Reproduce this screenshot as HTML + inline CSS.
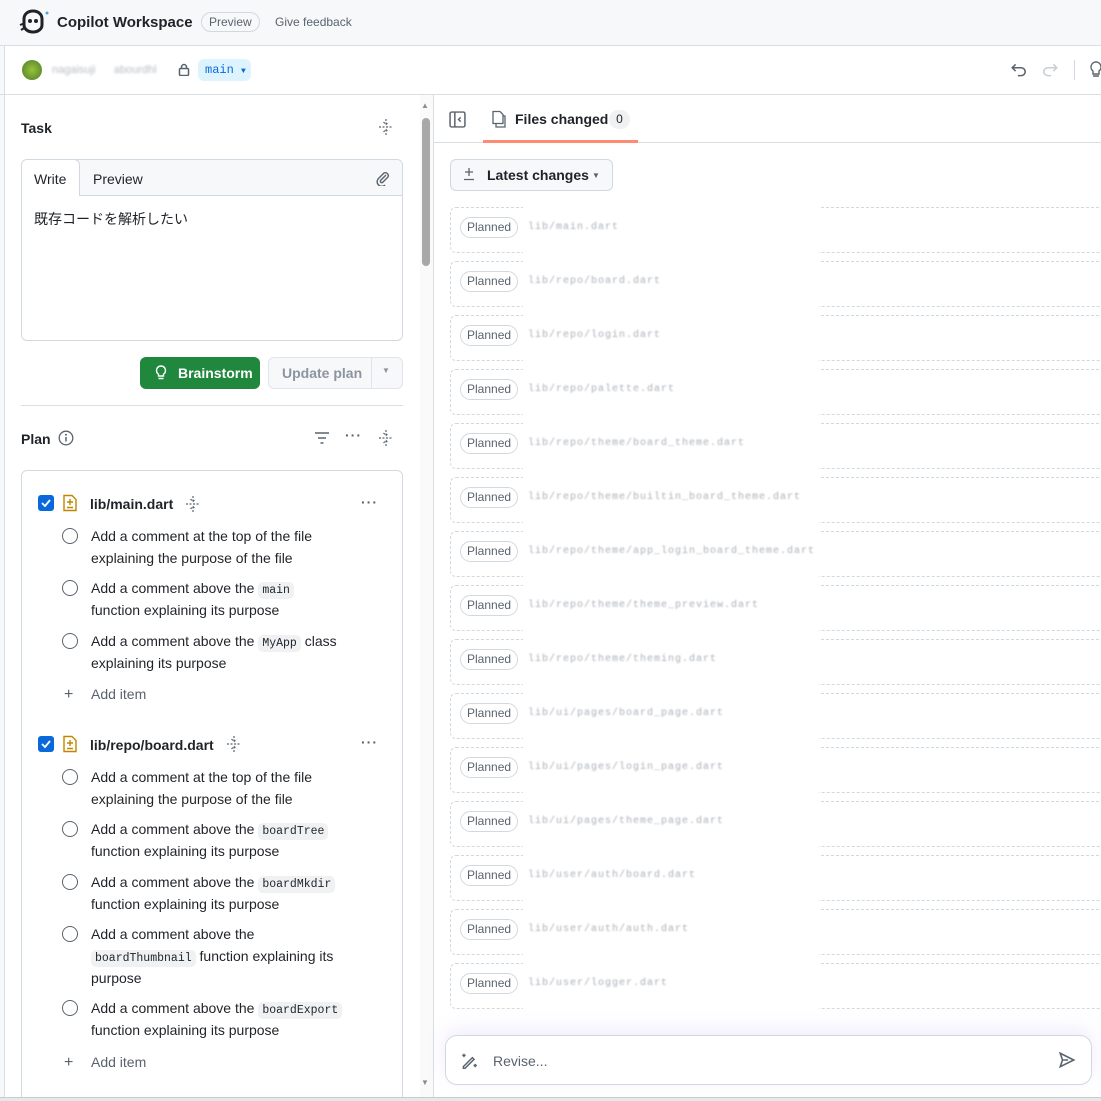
<!DOCTYPE html>
<html><head><meta charset="utf-8"><style>
*{box-sizing:border-box;margin:0;padding:0}
html{width:1101px;height:1101px;overflow:hidden}
body{width:1101px;height:1101px;overflow:hidden;background:#fff;font-family:"Liberation Sans","Noto Sans CJK JP",sans-serif;color:#1f2328;font-size:14px;position:relative}
.abs{position:absolute}
.hdr{left:0;top:0;width:1101px;height:46px;background:#f6f8fa;border-bottom:1px solid #d8dee4}
.tb{left:0;top:46px;width:1101px;height:49px;border-bottom:1px solid #d8dee4}
.code{font-family:"Liberation Mono",monospace;font-size:11.5px;background:#eff1f3;border-radius:5px;padding:2px 4px;line-height:1}
.item{position:absolute;left:91px;line-height:22px;font-size:14px;white-space:nowrap}
.circ{position:absolute;left:62px;width:16px;height:16px;border:1.6px solid #59636e;border-radius:50%}
.row{position:absolute;left:450px;width:660px;height:46px;border:1px dashed #d1d9e0;border-radius:6px}
.row .cov{position:absolute;left:72px;top:-2px;width:296px;height:48px;background:#fff}
.pl{position:absolute;left:9px;top:9px;height:21px;padding:0 6px;border:1px solid #d1d9e0;border-radius:12px;font-size:12px;line-height:19px;color:#59636e;background:#fff}
.bl{position:absolute;left:77px;top:14px;color:#aab0b8;font-size:10px;filter:blur(0.8px);letter-spacing:1px;font-family:"Liberation Mono",monospace}
.add{position:absolute;left:64px;color:#59636e;font-size:14px}
.add b{font-weight:normal;display:inline-block;width:27px;font-size:16px}
</style></head><body>
<div class="abs" style="left:0;top:0;width:5px;height:1101px;border-right:1px solid #d8dee4;background:#f6f8fa"></div>
<div class="abs hdr"></div>
<svg class="abs" style="left:18px;top:9px" width="32" height="26" viewBox="0 0 32 26"><path d="M6 10c0-5 4-8 9-8s9 3 9 8v6c0 4-4 7-9 7s-9-3-9-7z" fill="none" stroke="#1f2328" stroke-width="3"/><circle cx="12" cy="12" r="2" fill="#1f2328"/><circle cx="18" cy="12" r="2" fill="#1f2328"/><path d="M2 16l5-2M3 21l5-3" stroke="#1f2328" stroke-width="2"/><circle cx="29" cy="4" r="1.5" fill="#4aa8e0"/></svg>
<div class="abs" style="left:57px;top:14px;font-size:15px;font-weight:bold;color:#1f2328">Copilot Workspace</div>
<div class="abs" style="left:201px;top:12px;height:20px;padding:0 7px;border:1px solid #d1d9e0;border-radius:10px;font-size:12px;line-height:18px;color:#59636e">Preview</div>
<div class="abs" style="left:275px;top:15px;font-size:12px;color:#59636e">Give feedback</div>
<div class="abs tb"></div>
<div class="abs" style="left:22px;top:60px;width:20px;height:20px;border-radius:50%;background:radial-gradient(#9bc23a,#4a7a2a)"></div>
<div class="abs" style="left:52px;top:64px;font-size:11px;color:#b8bcc2;filter:blur(1px)">nagaisuji &nbsp;&nbsp;&nbsp;&nbsp; abourdhl</div>
<svg class="abs" style="left:178px;top:63px" width="12" height="13" viewBox="0 0 12 13"><rect x="1.5" y="5.5" width="9" height="7" rx="1" fill="none" stroke="#59636e" stroke-width="1.5"/><path d="M3.5 5.5V4a2.5 2.5 0 015 0v1.5" fill="none" stroke="#59636e" stroke-width="1.5"/></svg>
<div class="abs" style="left:198px;top:59px;height:22px;width:53px;background:#ddf4ff;border-radius:6px;font-family:'Liberation Mono',monospace;font-size:12px;color:#0969da;line-height:22px;padding-left:7px">main <span style="font-size:8px">▼</span></div>
<svg class="abs" style="left:1010px;top:61px" width="18" height="18" viewBox="0 0 16 16"><path d="M5 3L2 6l3 3M2 6h8a3.5 3.5 0 010 7H7" fill="none" stroke="#59636e" stroke-width="1.4"/></svg>
<svg class="abs" style="left:1041px;top:61px" width="18" height="18" viewBox="0 0 16 16"><path d="M11 3l3 3-3 3M14 6H6a3.5 3.5 0 000 7h3" fill="none" stroke="#c8ced5" stroke-width="1.4"/></svg>
<div class="abs" style="left:1074px;top:60px;width:1px;height:20px;background:#d1d9e0"></div>
<svg class="abs" style="left:1090px;top:60px" width="14" height="20" viewBox="0 0 14 20"><path d="M6 2a5 5 0 00-3 9v3h6v-3a5 5 0 00-3-9zM3 16h6" fill="none" stroke="#59636e" stroke-width="1.4"/></svg>

<div class="abs" style="left:21px;top:120px;font-size:14px;font-weight:bold">Task</div>
<svg class="abs" style="left:378px;top:118px" width="16" height="18" viewBox="0 0 16 18"><path d="M8 1v5M5.5 4L8 6.5 10.5 4M8 17v-5M5.5 14L8 11.5 10.5 14M1 9h14" fill="none" stroke="#59636e" stroke-width="1.2" stroke-dasharray="2 1.5"/></svg>
<div class="abs" style="left:21px;top:159px;width:382px;height:182px;border:1px solid #d1d9e0;border-radius:6px;overflow:hidden">
 <div style="height:36px;background:#f6f8fa;border-bottom:1px solid #d1d9e0;position:relative">
  <div style="position:absolute;left:-1px;top:-1px;width:59px;height:37px;background:#fff;border:1px solid #d1d9e0;border-bottom:none;border-radius:6px 6px 0 0;padding:11px 0 0 12px">Write</div>
  <div style="position:absolute;left:71px;top:11px">Preview</div>
  <svg style="position:absolute;left:353px;top:10px" width="16" height="16" viewBox="0 0 16 16"><path d="M11 5l-5.5 5.5a1.5 1.5 0 002 2L13 7a3 3 0 00-4-4L3.5 8.5a4.5 4.5 0 006.5 6.5" fill="none" stroke="#59636e" stroke-width="1.4"/></svg>
 </div>
 <div style="padding:13px 12px;font-size:14px">既存コードを解析したい</div>
</div>
<div class="abs" style="left:140px;top:357px;width:120px;height:32px;background:#1f883d;border-radius:6px;color:#fff;font-weight:bold;line-height:32px;padding-left:38px">Brainstorm</div>
<svg class="abs" style="left:154px;top:365px" width="14" height="16" viewBox="0 0 14 16"><path d="M7 1a4.5 4.5 0 00-2.5 8.2V11h5V9.2A4.5 4.5 0 007 1zM4.5 13.5h5" fill="none" stroke="#fff" stroke-width="1.4"/></svg>
<div class="abs" style="left:268px;top:357px;width:135px;height:32px;background:#f6f8fa;border:1px solid #e1e4e8;border-radius:6px;color:#8c959f;line-height:30px;padding-left:13px;font-weight:bold">Update plan</div>
<div class="abs" style="left:371px;top:358px;width:1px;height:30px;background:#e1e4e8"></div>
<div class="abs" style="left:382px;top:366px;font-size:8px;color:#8c959f">▼</div>
<div class="abs" style="left:21px;top:405px;width:382px;height:1px;background:#d8dee4"></div>
<div class="abs" style="left:21px;top:431px;font-weight:bold">Plan</div>
<svg class="abs" style="left:58px;top:430px" width="16" height="16" viewBox="0 0 16 16"><circle cx="8" cy="8" r="6.8" fill="none" stroke="#59636e" stroke-width="1.3"/><path d="M8 7v4.5" stroke="#59636e" stroke-width="1.5"/><circle cx="8" cy="4.8" r="1" fill="#59636e"/></svg>
<svg class="abs" style="left:314px;top:431px" width="16" height="14" viewBox="0 0 16 14"><path d="M1 2h14M4 7h8M6.5 12h3" stroke="#59636e" stroke-width="1.4"/></svg>
<div class="abs" style="left:345px;top:427px;font-size:14px;color:#59636e;letter-spacing:1px;font-weight:bold">···</div>
<svg class="abs" style="left:378px;top:429px" width="16" height="18" viewBox="0 0 16 18"><path d="M8 1v5M5.5 4L8 6.5 10.5 4M8 17v-5M5.5 14L8 11.5 10.5 14M1 9h14" fill="none" stroke="#59636e" stroke-width="1.2" stroke-dasharray="2 1.5"/></svg>
<div class="abs" style="left:21px;top:470px;width:382px;height:660px;border:1px solid #d1d9e0;border-radius:6px"></div>

<div class="abs" style="left:38px;top:495px;width:16px;height:16px;background:#0969da;border-radius:3px"></div>
<svg class="abs" style="left:38px;top:495px" width="16" height="16"><path d="M4 8l3 3 5-6" fill="none" stroke="#fff" stroke-width="1.8"/></svg>
<svg class="abs" style="left:62px;top:494px" width="16" height="18" viewBox="0 0 16 18"><path d="M2 1.5h8l4 4v11H2z" fill="none" stroke="#bf8700" stroke-width="1.4"/><path d="M8 5v6M5 8h6M5 13.5h6" stroke="#bf8700" stroke-width="1.4"/></svg>
<div class="abs" style="left:90px;top:496px;font-weight:bold">lib/main.dart</div>
<svg class="abs" style="left:185px;top:495px" width="16" height="18" viewBox="0 0 16 18"><path d="M8 1v5M5.5 4L8 6.5 10.5 4M8 17v-5M5.5 14L8 11.5 10.5 14M1 9h14" fill="none" stroke="#59636e" stroke-width="1.2" stroke-dasharray="2 1.5"/></svg>
<div class="abs" style="left:361px;top:494px;color:#59636e;font-weight:bold;letter-spacing:1px">···</div>
<div class="circ" style="top:528px"></div><div class="item" style="top:525px">Add a comment at the top of the file<br>explaining the purpose of the file</div>
<div class="circ" style="top:580px"></div><div class="item" style="top:577px">Add a comment above the <span class="code">main</span><br>function explaining its purpose</div>
<div class="circ" style="top:633px"></div><div class="item" style="top:630px">Add a comment above the <span class="code">MyApp</span> class<br>explaining its purpose</div>
<div class="add" style="top:686px"><b>+</b>Add item</div>

<div class="abs" style="left:38px;top:736px;width:16px;height:16px;background:#0969da;border-radius:3px"></div>
<svg class="abs" style="left:38px;top:736px" width="16" height="16"><path d="M4 8l3 3 5-6" fill="none" stroke="#fff" stroke-width="1.8"/></svg>
<svg class="abs" style="left:62px;top:735px" width="16" height="18" viewBox="0 0 16 18"><path d="M2 1.5h8l4 4v11H2z" fill="none" stroke="#bf8700" stroke-width="1.4"/><path d="M8 5v6M5 8h6M5 13.5h6" stroke="#bf8700" stroke-width="1.4"/></svg>
<div class="abs" style="left:90px;top:737px;font-weight:bold">lib/repo/board.dart</div>
<svg class="abs" style="left:226px;top:735px" width="16" height="18" viewBox="0 0 16 18"><path d="M8 1v5M5.5 4L8 6.5 10.5 4M8 17v-5M5.5 14L8 11.5 10.5 14M1 9h14" fill="none" stroke="#59636e" stroke-width="1.2" stroke-dasharray="2 1.5"/></svg>
<div class="abs" style="left:361px;top:734px;color:#59636e;font-weight:bold;letter-spacing:1px">···</div>
<div class="circ" style="top:769px"></div><div class="item" style="top:766px">Add a comment at the top of the file<br>explaining the purpose of the file</div>
<div class="circ" style="top:821px"></div><div class="item" style="top:818px">Add a comment above the <span class="code">boardTree</span><br>function explaining its purpose</div>
<div class="circ" style="top:874px"></div><div class="item" style="top:871px">Add a comment above the <span class="code">boardMkdir</span><br>function explaining its purpose</div>
<div class="circ" style="top:926px"></div><div class="item" style="top:923px">Add a comment above the<br><span class="code">boardThumbnail</span> function explaining its<br>purpose</div>
<div class="circ" style="top:1000px"></div><div class="item" style="top:997px">Add a comment above the <span class="code">boardExport</span><br>function explaining its purpose</div>
<div class="add" style="top:1054px"><b>+</b>Add item</div>

<div class="abs" style="left:420px;top:95px;width:13px;height:1002px;background:#fafafa"></div>
<div class="abs" style="left:422px;top:118px;width:8px;height:148px;background:#a8a8a8;border-radius:4px"></div>
<div class="abs" style="left:421px;top:101px;font-size:8px;color:#8c8c8c">▲</div>
<div class="abs" style="left:421px;top:1078px;font-size:8px;color:#8c8c8c">▼</div>
<div class="abs" style="left:433px;top:95px;width:1px;height:1002px;background:#d8dee4"></div>

<div class="abs" style="left:434px;top:142px;width:667px;height:1px;background:#d8dee4"></div>
<svg class="abs" style="left:449px;top:111px" width="17" height="17" viewBox="0 0 16 16"><rect x="1" y="1" width="14" height="14" rx="1.5" fill="none" stroke="#59636e" stroke-width="1.4"/><path d="M5.5 1v14M11 6l-2 2 2 2" fill="none" stroke="#59636e" stroke-width="1.4"/></svg>
<svg class="abs" style="left:491px;top:110px" width="16" height="18" viewBox="0 0 16 18"><path d="M2 1.5h7l3 3v9H2zM12 6h2v11H5v-3" fill="none" stroke="#59636e" stroke-width="1.3"/></svg>
<div class="abs" style="left:515px;top:111px;font-size:14px;font-weight:bold;color:#1f2328">Files changed</div>
<div class="abs" style="left:609px;top:110px;width:21px;height:19px;background:#eff1f3;border-radius:10px;font-size:12px;text-align:center;line-height:19px">0</div>
<div class="abs" style="left:483px;top:140px;width:155px;height:3px;background:#fd8c73"></div>
<div class="abs" style="left:450px;top:159px;width:163px;height:32px;background:#f6f8fa;border:1px solid #d1d9e0;border-radius:6px;font-weight:bold;line-height:30px;padding-left:36px">Latest changes</div>
<svg class="abs" style="left:463px;top:167px" width="12" height="14" viewBox="0 0 12 14"><path d="M6 1v8M2 5h8M1 12.5h10" stroke="#59636e" stroke-width="1.3"/></svg>
<div class="abs" style="left:592px;top:171px;font-size:8px;color:#59636e">▼</div>

<div class="row" style="top:207px"><div class="cov"></div><span class="pl">Planned</span><span class="bl">lib/main.dart</span></div>
<div class="row" style="top:261px"><div class="cov"></div><span class="pl">Planned</span><span class="bl">lib/repo/board.dart</span></div>
<div class="row" style="top:315px"><div class="cov"></div><span class="pl">Planned</span><span class="bl">lib/repo/login.dart</span></div>
<div class="row" style="top:369px"><div class="cov"></div><span class="pl">Planned</span><span class="bl">lib/repo/palette.dart</span></div>
<div class="row" style="top:423px"><div class="cov"></div><span class="pl">Planned</span><span class="bl">lib/repo/theme/board_theme.dart</span></div>
<div class="row" style="top:477px"><div class="cov"></div><span class="pl">Planned</span><span class="bl">lib/repo/theme/builtin_board_theme.dart</span></div>
<div class="row" style="top:531px"><div class="cov"></div><span class="pl">Planned</span><span class="bl">lib/repo/theme/app_login_board_theme.dart</span></div>
<div class="row" style="top:585px"><div class="cov"></div><span class="pl">Planned</span><span class="bl">lib/repo/theme/theme_preview.dart</span></div>
<div class="row" style="top:639px"><div class="cov"></div><span class="pl">Planned</span><span class="bl">lib/repo/theme/theming.dart</span></div>
<div class="row" style="top:693px"><div class="cov"></div><span class="pl">Planned</span><span class="bl">lib/ui/pages/board_page.dart</span></div>
<div class="row" style="top:747px"><div class="cov"></div><span class="pl">Planned</span><span class="bl">lib/ui/pages/login_page.dart</span></div>
<div class="row" style="top:801px"><div class="cov"></div><span class="pl">Planned</span><span class="bl">lib/ui/pages/theme_page.dart</span></div>
<div class="row" style="top:855px"><div class="cov"></div><span class="pl">Planned</span><span class="bl">lib/user/auth/board.dart</span></div>
<div class="row" style="top:909px"><div class="cov"></div><span class="pl">Planned</span><span class="bl">lib/user/auth/auth.dart</span></div>
<div class="row" style="top:963px"><div class="cov"></div><span class="pl">Planned</span><span class="bl">lib/user/logger.dart</span></div>

<div class="abs" style="left:445px;top:1035px;width:647px;height:50px;border:1px solid #d1d9e0;border-radius:12px;background:#fff;box-shadow:0 -6px 20px rgba(160,130,230,0.15)"></div>
<svg class="abs" style="left:460px;top:1052px" width="18" height="18" viewBox="0 0 16 16"><path d="M3 13L11 5l1.5 1.5-8 8H3zM2 3h3M3.5 1.5v3M12 12h3M13.5 10.5v3" fill="none" stroke="#59636e" stroke-width="1.3"/></svg>
<div class="abs" style="left:493px;top:1053px;font-size:14px;color:#59636e">Revise...</div>
<svg class="abs" style="left:1058px;top:1051px" width="18" height="18" viewBox="0 0 16 16"><path d="M2 2l12 6-12 6 2-6zM4 8h5" fill="none" stroke="#59636e" stroke-width="1.4"/></svg>
<div class="abs" style="left:0;top:1097px;width:1101px;height:4px;background:#e6e8ea;border-top:1px solid #c8ccd0"></div>
</body></html>
